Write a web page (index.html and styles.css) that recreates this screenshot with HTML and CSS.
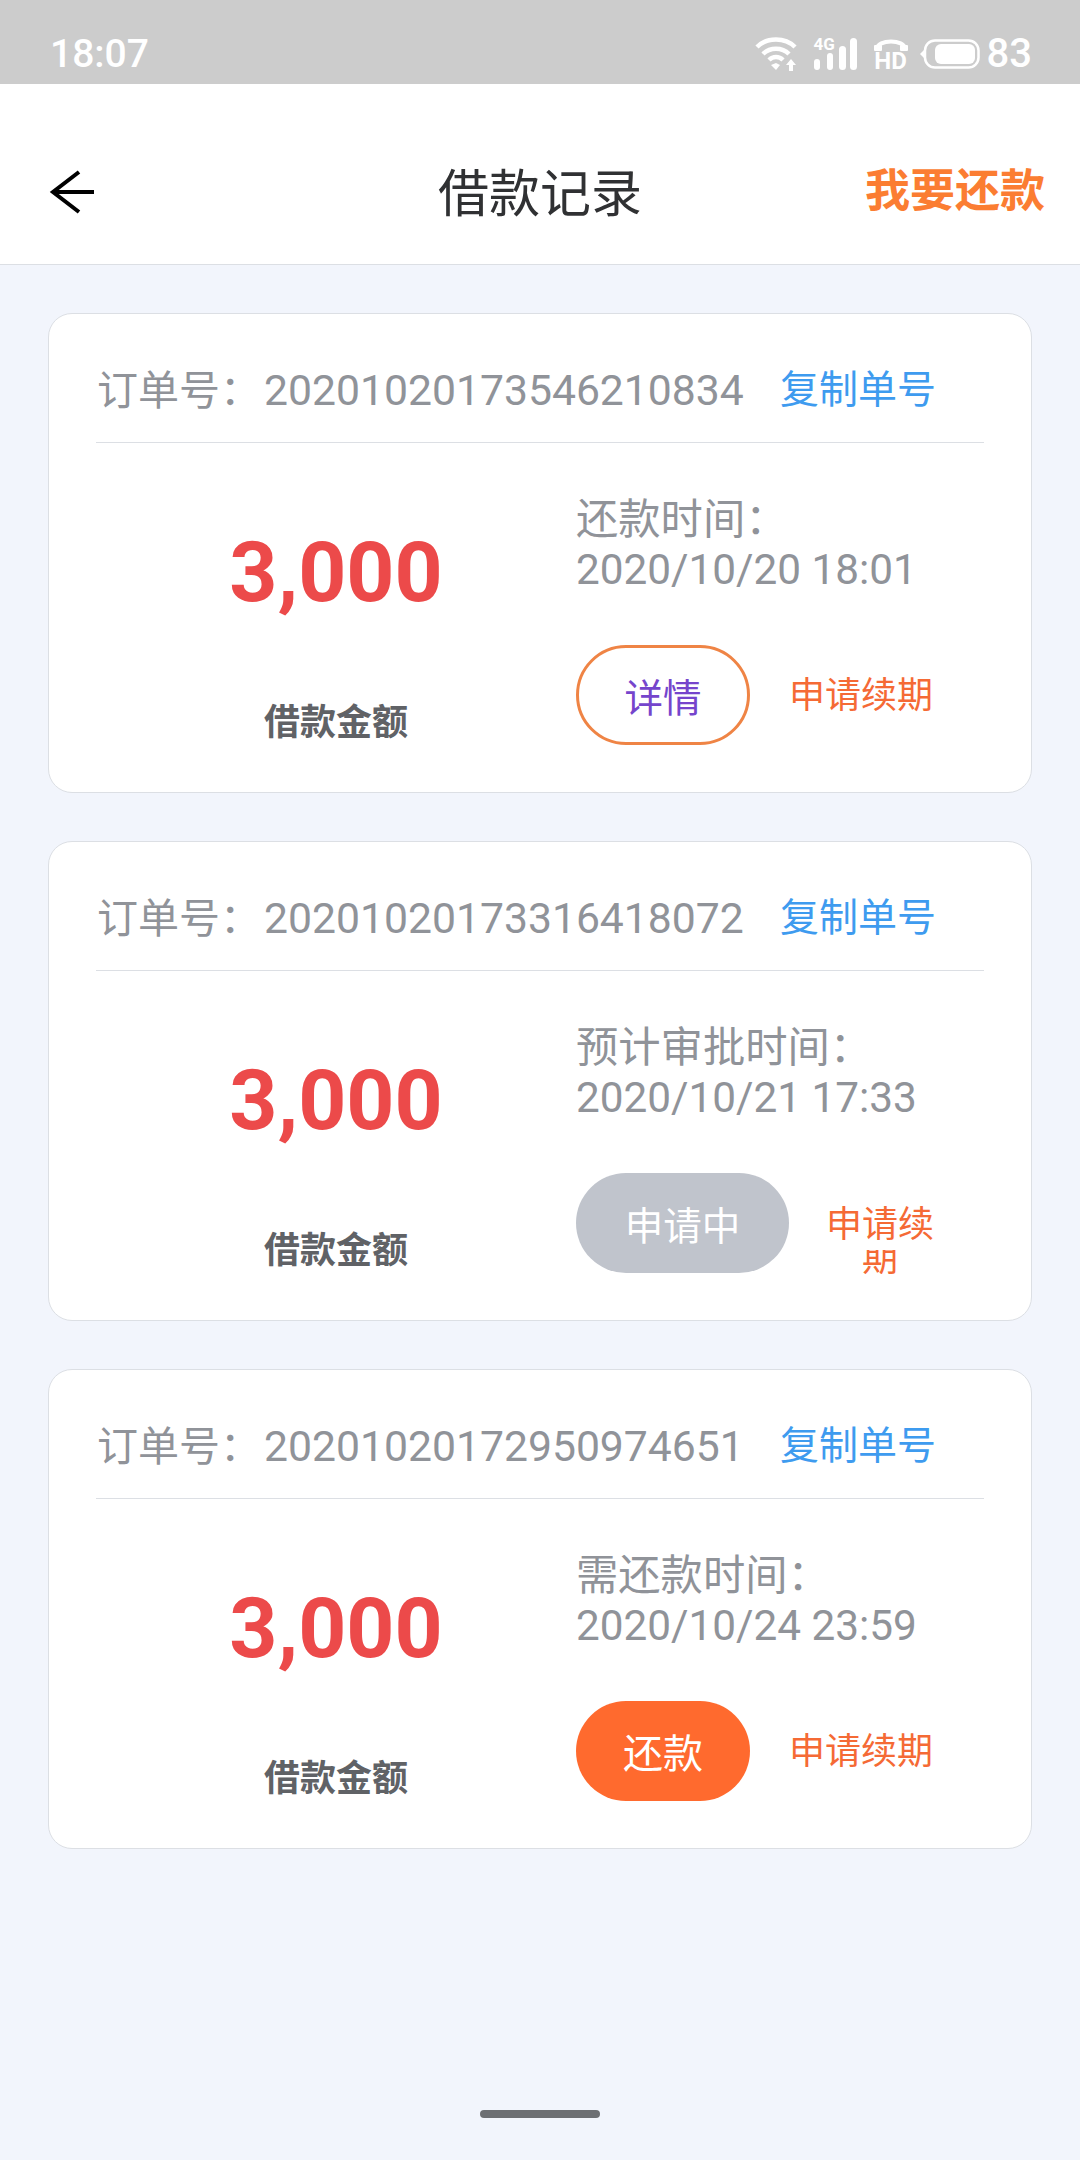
FILE: index.html
```html
<!DOCTYPE html>
<html lang="zh-CN">
<head>
    <meta charset="UTF-8">
    <title>借款记录</title>
    <link rel="stylesheet" href="styles.css">
</head>
<body>
    <div class="status-bar">
        <span class="status-time">18:07</span>
        <div class="status-icons">
            <svg class="icon-wifi" width="42" height="34" viewBox="0 0 42 34">
                <path d="M2 10C12 0 30 0 40 10M8 17C15 10 27 10 34 17M14 23C18 19 24 19 28 23" fill="none" stroke="#fff" stroke-width="4.5"/>
                <path d="M16 28L21 26L25 28L21 33Z" fill="#fff"/>
                <path d="M36 22L41 28H38V34H34V28H31Z" fill="#fff"/>
            </svg>
            <div class="signal">
                <span class="signal-label">4G</span>
                <svg width="44" height="34" viewBox="0 0 44 34">
                    <rect x="0" y="22" width="6" height="11" rx="3" fill="#fff"/>
                    <rect x="13" y="16" width="6" height="17" rx="3" fill="#fff"/>
                    <rect x="25" y="9" width="7" height="24" rx="3.5" fill="#fff"/>
                    <rect x="36" y="1" width="7" height="32" rx="3.5" fill="#fff"/>
                </svg>
            </div>
            <div class="hd">
                <svg width="34" height="14" viewBox="0 0 34 14">
                    <path d="M3 12C3 2 31 2 31 12" fill="none" stroke="#fff" stroke-width="4"/>
                    <rect x="0" y="8" width="8" height="6" rx="1" fill="#fff"/>
                    <rect x="26" y="8" width="8" height="6" rx="1" fill="#fff"/>
                </svg>
                <span class="hd-label">HD</span>
            </div>
            <svg width="60" height="30" viewBox="0 0 60 30">
                <path d="M0 15L4 11V19Z" fill="#fff"/>
                <rect x="5" y="1.5" width="53.5" height="27" rx="10" fill="none" stroke="#fff" stroke-width="2.5"/>
                <rect x="15" y="5" width="40" height="20" rx="6" fill="#fff"/>
            </svg>
            <span class="status-battery">83</span>
        </div>
    </div>

    <header class="nav">
        <svg class="nav-back" width="46" height="44" viewBox="0 0 46 44">
            <path d="M45 22H4M30 2L4 22L30 42" fill="none" stroke="#000" stroke-width="4"/>
        </svg>
        <h1 class="nav-title">借款记录</h1>
        <a class="nav-action">我要还款</a>
    </header>

    <main class="list">
        <section class="card">
            <div class="card-head">
                <span class="order">订单号：<span class="order-no">20201020173546210834</span></span>
                <a class="copy">复制单号</a>
            </div>
            <div class="card-body">
                <div class="amount-col">
                    <div class="amount">3,000</div>
                    <div class="amount-label">借款金额</div>
                </div>
                <div class="info-col">
                    <div class="info-text">还款时间：<br>2020/10/20 18:01</div>
                    <div class="actions">
                        <button class="btn btn-outline">详情</button>
                        <span class="renew">申请续期</span>
                    </div>
                </div>
            </div>
        </section>

        <section class="card">
            <div class="card-head">
                <span class="order">订单号：<span class="order-no">20201020173316418072</span></span>
                <a class="copy">复制单号</a>
            </div>
            <div class="card-body">
                <div class="amount-col">
                    <div class="amount">3,000</div>
                    <div class="amount-label">借款金额</div>
                </div>
                <div class="info-col">
                    <div class="info-text">预计审批时间：<br>2020/10/21 17:33</div>
                    <div class="actions">
                        <button class="btn btn-wide">申请中</button>
                        <div class="renew renew-narrow">
                            <div class="renew-line">申请续</div>
                            <div class="renew-cut"><span>期</span></div>
                        </div>
                    </div>
                </div>
            </div>
        </section>

        <section class="card">
            <div class="card-head">
                <span class="order">订单号：<span class="order-no">20201020172950974651</span></span>
                <a class="copy">复制单号</a>
            </div>
            <div class="card-body">
                <div class="amount-col">
                    <div class="amount">3,000</div>
                    <div class="amount-label">借款金额</div>
                </div>
                <div class="info-col">
                    <div class="info-text">需还款时间：<br>2020/10/24 23:59</div>
                    <div class="actions">
                        <button class="btn btn-solid">还款</button>
                        <span class="renew">申请续期</span>
                    </div>
                </div>
            </div>
        </section>
    </main>

    <div class="home-bar"></div>
</body>
</html>
```

FILE: styles.css
```css
* {
    box-sizing: border-box;
}

body {
    margin: 0;
    height: 2160px;
    overflow: hidden;
    position: relative;
    background: #f2f5fc;
    font-family: Roboto, "Noto Sans CJK SC", sans-serif;
}

.status-bar {
    height: 84px;
    background: #cccccc;
    color: #fff;
    padding: 0 48px 0 50px;
    display: flex;
    align-items: flex-end;
    justify-content: space-between;
}

.status-time {
    font-size: 39px;
    font-weight: 500;
    line-height: 44px;
    margin-bottom: 8px;
}

.status-icons {
    display: flex;
    align-items: center;
    height: 36px;
    margin-bottom: 12px;
}

.icon-wifi {
    margin-right: 17px;
}

.signal {
    position: relative;
    width: 44px;
    height: 34px;
    margin-right: 16px;
}

.signal svg {
    display: block;
}

.signal-label {
    position: absolute;
    left: 0;
    top: -2px;
    font-size: 17px;
    font-weight: 700;
    line-height: 18px;
}

.hd {
    width: 34px;
    height: 34px;
    margin-right: 12px;
    display: flex;
    flex-direction: column;
    align-items: center;
}

.hd svg {
    display: block;
}

.hd-label {
    font-size: 24px;
    font-weight: 700;
    line-height: 20px;
}

.status-battery {
    font-size: 40px;
    font-weight: 500;
    line-height: 36px;
    margin-left: 7px;
}

.nav {
    height: 181px;
    background: #fff;
    border-bottom: 1px solid #dcdfe4;
    position: relative;
    display: flex;
    align-items: center;
    justify-content: center;
}

.nav-back {
    position: absolute;
    left: 49px;
    top: 86px;
}

.nav-title {
    margin: 0;
    font-size: 51px;
    font-weight: 400;
    color: #303133;
    position: relative;
    top: 16px;
}

.nav-action {
    position: absolute;
    right: 35px;
    top: 80px;
    font-size: 45px;
    line-height: 56px;
    font-weight: 700;
    color: #fb7d32;
}

.list {
    padding: 48px 48px 0;
    display: flex;
    flex-direction: column;
    gap: 48px;
}

.card {
    height: 480px;
    background: #fff;
    border: 1px solid #dcdfe4;
    border-radius: 24px;
    padding: 0 47px;
}

.card-head {
    height: 129px;
    border-bottom: 1px solid #dcdfe4;
    display: flex;
    align-items: center;
    justify-content: space-between;
    padding: 24px 48px 0 1px;
    font-size: 41px;
    line-height: 56px;
}

.order {
    color: #909399;
}

.order-no {
    font-size: 42.7px;
    margin-left: 3px;
}

.copy {
    color: #3e9bef;
    font-size: 39px;
}

.card-body {
    display: flex;
    height: 350px;
}

.amount-col {
    width: 480px;
    text-align: center;
    color: #ec4a4a;
}

.amount {
    font-size: 84px;
    font-weight: 700;
    line-height: 104px;
    margin-top: 78px;
}

.amount-label {
    font-size: 36px;
    font-weight: 700;
    line-height: 50px;
    color: #606266;
    margin-top: 73px;
}

.info-col {
    flex: 1;
    padding-top: 52px;
}

.info-text {
    font-size: 42.3px;
    line-height: 50px;
    color: #909399;
}

.actions {
    display: flex;
    align-items: center;
    margin-top: 50px;
    height: 100px;
}

.btn {
    height: 100px;
    width: 174px;
    border: 0;
    border-radius: 50px;
    padding: 0;
    font-family: inherit;
    font-size: 38.5px;
    background: #c0c4cc;
    color: #fff;
}

.btn-outline {
    background: #fff;
    border: 3.5px solid #ef8445;
    color: #7545cc;
}

.btn-wide {
    width: 213px;
}

.btn-solid {
    background: #ff6a2e;
    font-size: 40px;
}

.renew {
    margin-left: 39px;
    margin-top: 2px;
    font-size: 36px;
    line-height: 50px;
    color: #f56a35;
    white-space: nowrap;
}

.renew-narrow {
    width: 108px;
    margin-left: 37px;
    align-self: flex-start;
    margin-top: 32px;
    text-align: center;
}

.renew-line {
    line-height: 40px;
}

.renew-cut {
    height: 24px;
    margin-top: 5px;
    overflow: hidden;
    display: flex;
    align-items: flex-end;
    justify-content: center;
}

.renew-cut span {
    line-height: 30px;
    flex-shrink: 0;
}

.home-bar {
    position: absolute;
    left: 480px;
    top: 2110px;
    width: 120px;
    height: 8px;
    border-radius: 4px;
    background: #6d6f73;
}
```
